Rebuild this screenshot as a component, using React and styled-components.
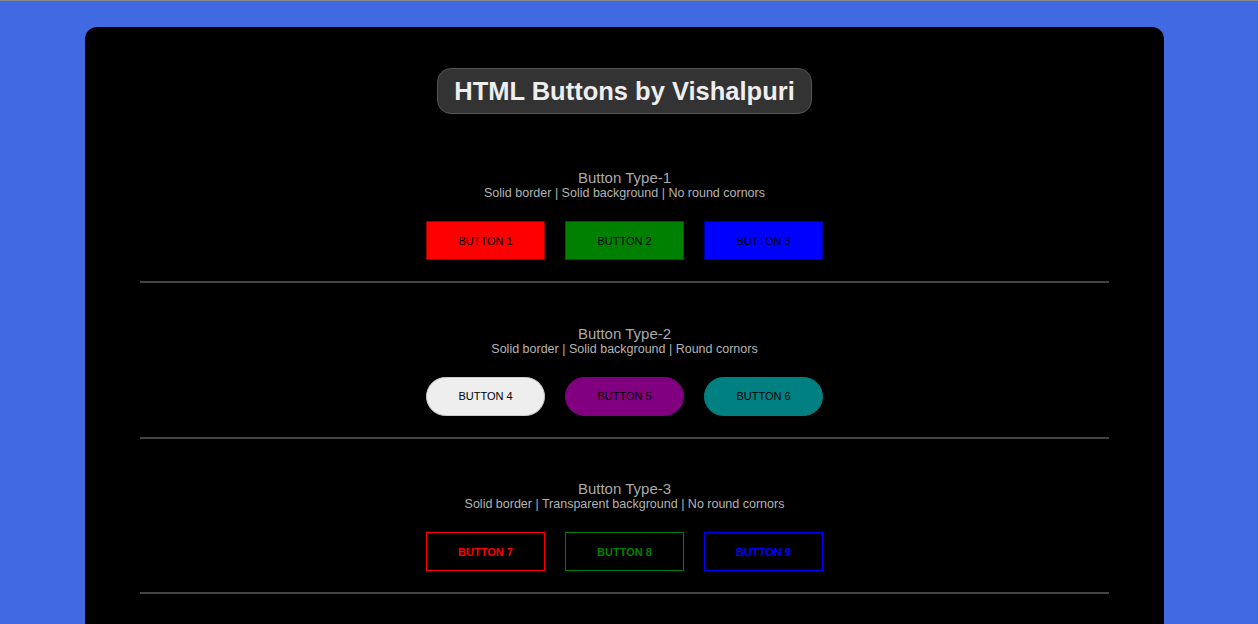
import React from 'react'
import styled, { createGlobalStyle, css } from 'styled-components'

const GlobalStyle = createGlobalStyle`
    html, body {
        margin: 0;
        padding: 0;
    }
    body {
        background: #4169e1;
        border-top: 1px solid #8a8a8a;
        font-family: "Liberation Sans", Arial, sans-serif;
        min-height: 623px;
    }
`

const Container = styled.div`
    margin: 26px 94px 0 85px;
    background: #000;
    border-radius: 12px 12px 0 0;
    padding: 41px 55px 40px;
    min-height: 560px;
    display: flex;
    flex-direction: column;
    align-items: center;
`

const Title = styled.h1`
    margin: 0;
    padding: 0 16px;
    height: 44px;
    display: flex;
    align-items: center;
    background: #333;
    border: 1px solid #555;
    border-radius: 14px;
    color: #eee;
    font-size: 25.5px;
    font-weight: bold;
`

const Section = styled.section`
    align-self: stretch;
    display: flex;
    flex-direction: column;
    align-items: center;
    padding-top: ${props => (props.$first ? '55px' : '41.5px')};
`

const Heading = styled.h2`
    margin: 0;
    font-size: 15px;
    font-weight: normal;
    line-height: 17px;
    color: #aaa;
`

const Caption = styled.p`
    margin: 0;
    font-size: 12.5px;
    line-height: 14px;
    color: #b4b4b4;
`

const ButtonRow = styled.div`
    display: flex;
    gap: 20px;
    margin-top: 21px;
`

const Button = styled.button`
    width: 119px;
    height: 39px;
    font-family: "Liberation Sans", Arial, sans-serif;
    font-size: 11px;
    color: #000;
    background: ${props => props.$color};
    border: 1px solid ${props => props.$edge || props.$color};
    cursor: pointer;
    padding: 0;

    ${props => props.$round && css`
        border-radius: 20px;
    `}

    ${props => props.$outline && css`
        background: transparent;
        color: ${props.$color};
        border-color: ${props.$color};
        font-weight: bold;
    `}
`

const Divider = styled.hr`
    align-self: stretch;
    margin: 21px 0 0;
    border: 0;
    height: 2px;
    background: #444;
`

const sections = [
    {
        title: 'Button Type-1',
        caption: 'Solid border | Solid background | No round cornors',
        buttons: [
            { label: 'BUTTON 1', color: '#ff0000', edge: '#9a0000' },
            { label: 'BUTTON 2', color: '#008000', edge: '#005500' },
            { label: 'BUTTON 3', color: '#0000ff', edge: '#00009a' }
        ]
    },
    {
        title: 'Button Type-2',
        caption: 'Solid border | Solid background | Round cornors',
        round: true,
        buttons: [
            { label: 'BUTTON 4', color: '#eeeeee', edge: '#cccccc' },
            { label: 'BUTTON 5', color: '#800080' },
            { label: 'BUTTON 6', color: '#008080' }
        ]
    },
    {
        title: 'Button Type-3',
        caption: 'Solid border | Transparent background | No round cornors',
        outline: true,
        buttons: [
            { label: 'BUTTON 7', color: '#ff0000' },
            { label: 'BUTTON 8', color: '#008000' },
            { label: 'BUTTON 9', color: '#0000ff' }
        ]
    }
]

export default function App() {
    return (
        <>
            <GlobalStyle />
            <Container>
                <Title>HTML Buttons by Vishalpuri</Title>
                {sections.map((s, i) => (
                    <Section key={s.title} $first={i === 0}>
                        <Heading>{s.title}</Heading>
                        <Caption>{s.caption}</Caption>
                        <ButtonRow>
                            {s.buttons.map(b => (
                                <Button
                                    key={b.label}
                                    $color={b.color}
                                    $edge={b.edge}
                                    $round={s.round}
                                    $outline={s.outline}
                                >
                                    {b.label}
                                </Button>
                            ))}
                        </ButtonRow>
                        <Divider />
                    </Section>
                ))}
            </Container>
        </>
    )
}
